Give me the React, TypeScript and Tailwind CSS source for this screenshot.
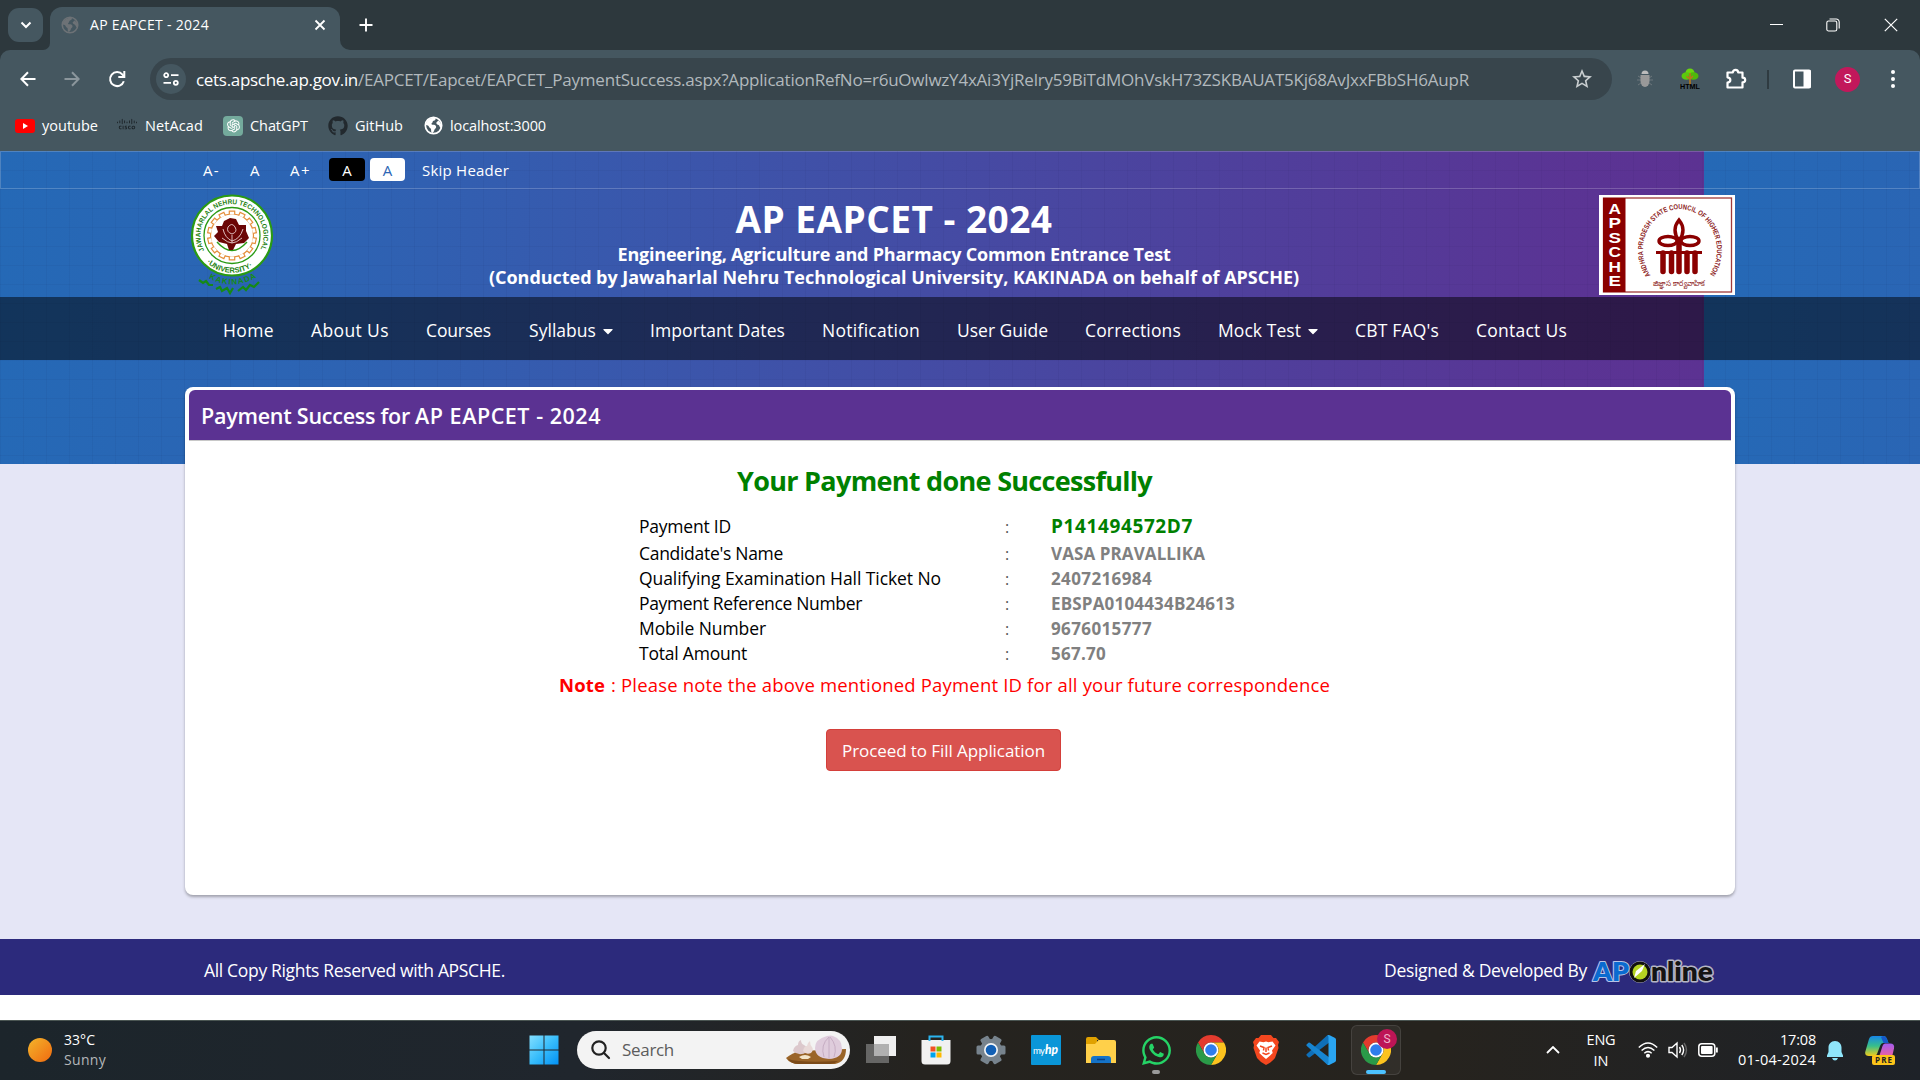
import { useLayoutEffect, useRef, useState, type ReactNode } from "react";
import { AiOutlineOpenAI } from "react-icons/ai";
import { FaGithub, FaWhatsapp, FaCaretDown } from "react-icons/fa";
import { SiBrave, SiCisco } from "react-icons/si";
import { MdStarBorder } from "react-icons/md";

/** Single line of text whose tracking is adjusted so that it fills the element's width. */
function T({ className, children }: { className: string; children: ReactNode }) {
  const outer = useRef<HTMLSpanElement>(null);
  const inner = useRef<HTMLSpanElement>(null);
  const [tracking, setTracking] = useState(0);
  useLayoutEffect(() => {
    if (!outer.current || !inner.current) return;
    const n = (inner.current.textContent ?? "").length;
    const diff = outer.current.clientWidth - inner.current.getBoundingClientRect().width;
    if (n > 1) setTracking(diff / n);
  }, []);
  return (
    <span ref={outer} className={"block shrink-0 whitespace-nowrap " + className}>
      <span ref={inner} style={{ letterSpacing: tracking }}>
        {children}
      </span>
    </span>
  );
}

function Globe({ className }: { className: string }) {
  return (
    <svg viewBox="0 0 20 20" className={className}>
      <circle cx="10" cy="10" r="8.6" fill="none" stroke="currentColor" strokeWidth="1.8" />
      <path
        d="M2 7.5C4 3.5 8 1.5 12 2c.6 1.8-.4 2.6-2 3-1.4.4-.4 1.8-1.6 2.4-1 .5-.6 1.8.6 1.8 2.6 0 3.8.6 3.8 2.4 0 1.4-1.4 1.6-1.8 2.8-.4 1.4-1 3-2.4 3.4-1.4-.8-1-2.4-1.2-3.8-.2-1.2-1.8-1.2-2.2-2.6C4.900 10 3.600 9.600 2 9.400zM13 7c.4-1.200 1.800-1 2-2.400l2.600 3c.8 2 .6 3.600 0 5-1.200-.2-1-2.200-2.200-3-1-.6-2.800-1.200-2.400-2.600z"
        fill="currentColor"
      />
    </svg>
  );
}

function ChromeIcon() {
  return (
    <svg viewBox="0 0 48 48" className="size-[30px] shrink-0">
      <path fill="#e33b2e" d="M24 12h20.780a23.990 23.990 0 0 0-41.564.003L13.608 30l.01-.002A11.985 11.985 0 0 1 24 12z" />
      <path fill="#fcc31e" d="M34.391 30.003 24 48a23.990 23.990 0 0 0 20.780-35.997H24v.01a11.985 11.985 0 0 1 10.391 17.990z" />
      <path fill="#2a9a48" d="M13.609 30.003 3.218 12.006A23.994 23.994 0 0 0 24.003 48l10.392-17.997-.007-.007a11.985 11.985 0 0 1-20.778.007z" />
      <circle cx="24" cy="24" r="12" fill="#fff" />
      <circle cx="24" cy="24" r="9.300" fill="#2f7ded" />
    </svg>
  );
}

function TabStrip() {
  return (
    <div className="flex h-[50px] bg-[#2d383d] text-white">
      <div className="mt-2 ml-2 flex h-[34px] w-[35px] items-center justify-center rounded-[11px] bg-[#455760]">
        <svg viewBox="0 0 12 12" className="size-3" fill="none" stroke="currentColor" strokeWidth="2">
          <path d="M1.500 3.500 6 8l4.500-4.500" />
        </svg>
      </div>
      <div className="flex w-[7px] items-end">
        <div className="h-[10px] w-[7px] bg-[#455760]">
          <div className="h-full w-full rounded-br-[9px] bg-[#2d383d]" />
        </div>
      </div>
      <div className="mt-[7px] flex w-[290px] items-center rounded-t-xl bg-[#455760] pb-[7px] pl-[11px]">
        <Globe className="size-[18px] text-[#6d7276]" />
        <T className="ml-[11px] w-[119px] font-['Open_Sans'] text-[14px] leading-5">AP EAPCET - 2024</T>
        <svg viewBox="0 0 12 12" className="ml-[105px] size-3" fill="none" stroke="currentColor" strokeWidth="1.800">
          <path d="m1.500 1.500 9 9m0-9-9 9" />
        </svg>
      </div>
      <div className="flex w-[10px] items-end">
        <div className="h-[10px] w-full bg-[#455760]">
          <div className="h-full w-full rounded-bl-[10px] bg-[#2d383d]" />
        </div>
      </div>
      <svg viewBox="0 0 14 14" className="mt-[18px] ml-[9px] size-[14px]" stroke="currentColor" strokeWidth="1.900">
        <path d="M7 .5v13M.5 7h13" />
      </svg>
      <div className="mr-[22px] ml-auto flex h-[49px] items-center">
        <div className="h-px w-[13px] bg-white" />
        <svg viewBox="0 0 14 14" className="ml-[43px] size-[14px]" fill="none" stroke="currentColor" strokeWidth="1.100">
          <rect x=".8" y="3" width="10" height="10" rx="1.800" />
          <path d="M3.500 1h6.700a3 3 0 0 1 3 3v6.500" />
        </svg>
        <svg viewBox="0 0 14 14" className="ml-[44px] size-[14px]" fill="none" stroke="currentColor" strokeWidth="1.200">
          <path d="m.8.8 12.400 12.400m0-12.400L.8 13.200" />
        </svg>
      </div>
    </div>
  );
}

function Toolbar() {
  return (
    <div className="bg-[#2d383d]">
      <div className="flex h-[58px] items-center rounded-t-[10px] bg-[#455760] text-white">
        <svg viewBox="0 0 16 16" className="ml-5 size-4" fill="none" stroke="currentColor" strokeWidth="2">
          <path d="M15.500 8H1.600M8 1.300 1.400 8 8 14.700" />
        </svg>
        <svg viewBox="0 0 16 16" className="ml-7 size-4 text-[#8b969c]" fill="none" stroke="currentColor" strokeWidth="2">
          <path d="M.5 8h13.900M8 1.300 14.600 8 8 14.700" />
        </svg>
        <svg viewBox="0 0 18 18" className="ml-[28px] size-[18px]" fill="none" stroke="currentColor" strokeWidth="2">
          <path d="M15.800 11.200A7 7 0 1 1 14.500 4.600L16 6.300" />
          <path d="M16.300 1v6h-6" />
        </svg>
        <div className="ml-[24px] flex h-[42px] w-[1462px] items-center rounded-full bg-[#38454c] pl-1.5">
          <div className="flex size-[30px] items-center justify-center rounded-full bg-[#455760]">
            <svg viewBox="0 0 16 14" className="h-[14px] w-4" fill="none" stroke="currentColor" strokeWidth="1.800">
              <circle cx="3.200" cy="3.200" r="2" />
              <path d="M8 3.200h7.500M.5 10.800H8" />
              <circle cx="12.800" cy="10.800" r="2" />
            </svg>
          </div>
          <T className="mt-px ml-[10px] w-[162px] font-['Open_Sans'] text-[17px] leading-6">cets.apsche.ap.gov.in</T>
          <T className="mt-px w-[1111px] font-['Open_Sans'] text-[17px] leading-6 text-[#b2b9bd]">
            /EAPCET/Eapcet/EAPCET_PaymentSuccess.aspx?ApplicationRefNo=r6uOwlwzY4xAi3YjRelry59BiTdMOhVskH73ZSKBAUAT5Kj68AvJxxFBbSH6AupR
          </T>
          <MdStarBorder className="ml-[101px] size-6 text-[#c9ced0]" />
        </div>
        <svg viewBox="0 0 18 18" className="ml-[24px] size-[18px]">
          <path d="M2 6l3 2M16 6l-3 2M1 10h4m12 0h-4M2 15l3-2m11 2-3-2" stroke="#6d777c" />
          <path d="M5.500 4a3.500 3.500 0 0 1 7 0z" fill="#bbb" />
          <path d="M4.500 5h9v6a4.500 6 0 0 1-9 0z" fill="#999" />
        </svg>
        <svg viewBox="0 0 20 22" className="ml-[26px] h-[22px] w-5">
          <circle cx="10" cy="5" r="4.500" fill="#6ad60f" />
          <ellipse cx="6.500" cy="8" rx="5" ry="3.800" fill="#5cc90d" />
          <ellipse cx="13.500" cy="8" rx="5" ry="3.800" fill="#4fb80b" />
          <path d="M10 5v12M6.500 8.500l3.500 2.500 3-3" stroke="#b8791a" strokeWidth="1.600" fill="none" />
          <text x="0" y="21" textLength="20" lengthAdjust="spacingAndGlyphs" fontSize="7.500" fontWeight="900" fontFamily="Liberation Sans, sans-serif" fill="#000">
            HTML
          </text>
        </svg>
        <svg viewBox="0 0 24 24" className="ml-[24px] size-6" fill="none" stroke="currentColor" strokeWidth="2.200" strokeLinejoin="round">
          <path d="M3.500 5.500h5.300c0-3.600 5.400-3.600 5.400 0h4.300v5.200c3.600 0 3.600 4.600 0 4.600v5.200h-15v-4.800c3.800-.6 3.800-4.800 0-5.400z" />
        </svg>
        <div className="ml-[19px] h-[19px] w-0.5 bg-[#2f3b41]" />
        <svg viewBox="0 0 20 20" className="ml-[23px] size-5">
          <rect x="2" y="1.500" width="16" height="17" rx="1" fill="none" stroke="#fff" strokeWidth="2" />
          <path d="M11.500 1h7v18h-7z" fill="#fff" />
        </svg>
        <div className="ml-[23px] flex size-[25px] items-center justify-center rounded-full bg-[#c2185b] font-[Roboto] text-[13px]">S</div>
        <div className="ml-[31px] flex flex-col gap-[3px]">
          <div className="size-1 rounded-full bg-white" />
          <div className="size-1 rounded-full bg-white" />
          <div className="size-1 rounded-full bg-white" />
        </div>
      </div>
    </div>
  );
}

function Bookmarks() {
  return (
    <div className="flex h-[43px] items-center bg-[#455760] pb-[8px] font-['Open_Sans'] text-[14.500px] leading-5 text-white">
      <svg viewBox="0 0 20 14" className="ml-[15px] h-[14px] w-5">
        <rect width="20" height="14" rx="3" fill="#f00" />
        <path d="M8 4v6l5-3z" fill="#fff" />
      </svg>
      <T className="ml-[7px] w-[56px]">youtube</T>
      <SiCisco className="-mt-1 ml-[19px] size-5 text-[#1b2226]" />
      <T className="ml-[8px] w-[58px]">NetAcad</T>
      <div className="ml-[20px] flex size-5 items-center justify-center rounded-sm bg-[#74aa9c]">
        <AiOutlineOpenAI className="size-[17px]" />
      </div>
      <T className="ml-[7px] w-[58px]">ChatGPT</T>
      <FaGithub className="ml-[20px] size-5 text-[#22292e]" />
      <T className="ml-[7px] w-[48px]">GitHub</T>
      <Globe className="ml-[21px] size-[19px]" />
      <T className="ml-[7px] w-[96px]">localhost:3000</T>
    </div>
  );
}

function UniversitySeal() {
  const teeth = Array.from({ length: 14 }, (_, i) => i * (360 / 14));
  return (
    <svg viewBox="0 0 84 103" className="h-[103px] w-[84px]" fontFamily="Liberation Sans, sans-serif">
      <defs>
        <path id="sealTop" d="M14.700 57.300A31.500 31.500 0 1 1 69.300 57.300" />
        <path id="sealBottom" d="M14.500 66.500A37 37 0 0 0 69.500 66.500" />
        <path id="sealTown" d="M12 80Q42 101 72 80" />
      </defs>
      <circle cx="42" cy="41.500" r="40" fill="#fff" stroke="#2a9a14" strokeWidth="2.200" />
      <circle cx="42" cy="41.500" r="28" fill="#fff" stroke="#2a9a14" strokeWidth="1.300" />
      <circle cx="42" cy="41.500" r="21.500" fill="none" stroke="#e58f3c" strokeWidth="1.200" />
      {teeth.map((a) => (
        <path key={a} d="M39.300 20.500v-3.400h5.400v3.400" fill="#fff" stroke="#e58f3c" strokeWidth="1.200" transform={`rotate(${a} 42 41.500)`} />
      ))}
      <path d="M27 48q15 17 30 0" fill="none" stroke="#2a9a14" strokeWidth="1.400" />
      <path d="M40 24l6 1 3 6 7 0 0 6 3 7-5 5-8 1-3 6-4 0-2-6-8-2-5-6 4-4-2-6 6 0 2-5z" fill="#6b0505" />
      <path d="M38 33q4-5 7 0t-3 7q-6-2-4-7M33 35q2 9 9 12 8-2 11-12M32 44q6 5 10 5t10-5M42 41v8" fill="none" stroke="#e9cfcf" strokeWidth=".9" />
      <text fontSize="6.900" fontWeight="bold" fill="#1d7f10" textLength="128" lengthAdjust="spacingAndGlyphs">
        <textPath href="#sealTop" startOffset="1" textLength="128" lengthAdjust="spacingAndGlyphs">JAWAHARLAL NEHRU TECHNOLOGICAL</textPath>
      </text>
      <text fontSize="7.500" fontWeight="bold" fill="#1d7f10">
        <textPath href="#sealBottom" startOffset="3">·UNIVERSITY·</textPath>
      </text>
      <text fontSize="8" fontWeight="bold" fill="#168a16">
        <textPath href="#sealTown" startOffset="8" textLength="50">KAKINADA</textPath>
      </text>
      <path d="M9 86l4 3 3-2 3 4 4 0M26 95l4-2 2 4 5-3 3 5 3-5M48 97l5-4 3 3 4-5 4 2 5-5" fill="none" stroke="#168a16" strokeWidth="2.200" />
    </svg>
  );
}

function CouncilLogo() {
  return (
    <svg viewBox="0 0 136 100" className="h-[100px] w-[136px]" fontFamily="Liberation Sans, sans-serif">
      <defs>
        <path id="councilArc" d="M51.500 80A37 41 0 1 1 111 79" />
      </defs>
      <rect width="136" height="100" fill="#fff" />
      <rect x="4.500" y="3" width="128" height="94" fill="none" stroke="#a03a3a" strokeWidth="1.300" />
      <rect x="4" y="3" width="22.500" height="94" fill="#8b0000" />
      {["A", "P", "S", "C", "H", "E"].map((c, i) => (
        <text key={i} x="9.500" y={18.500 + i * 14.500} textLength="12.500" lengthAdjust="spacingAndGlyphs" fontSize="14" fontWeight="bold" fill="#fff">
          {c}
        </text>
      ))}
      <text fontSize="7.200" fontWeight="bold" fill="#8b1a1a">
        <textPath href="#councilArc" textLength="174" lengthAdjust="spacingAndGlyphs">ANDHRA PRADESH STATE COUNCIL OF HIGHER EDUCATION</textPath>
      </text>
      <g fill="none" stroke="#8b0000" strokeWidth="3.400">
        <path d="M80 25q-8 10 0 21 8-11 0-21z" />
        <ellipse cx="69" cy="46" rx="9" ry="4.500" />
        <ellipse cx="91" cy="46" rx="9" ry="4.500" />
      </g>
      <path d="M57 56h46v3H57zM78 42h4v16h-4z" fill="#8b0000" />
      <g stroke="#8b0000" strokeWidth="5.500" strokeLinecap="round">
        <path d="M64 58v18.500M72.500 58v18.500M80 50v26.500M88 58v18.500M96 58v18.500" />
      </g>
      <text x="54" y="91" textLength="52" lengthAdjust="spacingAndGlyphs" fontSize="8" fill="#8b1a1a" fontFamily="'Noto Sans', sans-serif">
        జిజ్ఞాస కార్యవాహిక
      </text>
    </svg>
  );
}

function Accessibility() {
  return (
    <div className="flex h-[38px] items-center border border-white/20 font-['Open_Sans'] text-[15px] leading-5 text-white">
      <T className="ml-[202px] w-[17px]">A-</T>
      <T className="ml-[30px] w-[10px]">A</T>
      <T className="ml-[30px] w-[21px]">A+</T>
      <div className="mb-px ml-[18px] flex h-[23px] w-[36px] items-center justify-center rounded bg-black">A</div>
      <div className="mb-px ml-[5px] flex h-[23px] w-[35px] items-center justify-center rounded bg-white text-[#2c66b5]">A</div>
      <T className="ml-[17px] w-[87px]">Skip Header</T>
    </div>
  );
}

function Nav() {
  return (
    <nav className="flex h-[63px] items-center bg-black/50 pt-[2px] font-['Open_Sans'] text-[17.500px] leading-6 text-white">
      <T className="ml-[223px] w-[51px]">Home</T>
      <T className="ml-[37px] w-[78px]">About Us</T>
      <T className="ml-[37px] w-[65px]">Courses</T>
      <T className="ml-[38px] w-[67px]">Syllabus</T>
      <FaCaretDown className="mt-[3px] ml-[4px] size-4" />
      <T className="ml-[34px] w-[135px]">Important Dates</T>
      <T className="ml-[37px] w-[98px]">Notification</T>
      <T className="ml-[37px] w-[91px]">User Guide</T>
      <T className="ml-[37px] w-[96px]">Corrections</T>
      <T className="ml-[37px] w-[83px]">Mock Test</T>
      <FaCaretDown className="mt-[3px] ml-[4px] size-4" />
      <T className="ml-[34px] w-[84px]">CBT FAQ's</T>
      <T className="ml-[37px] w-[91px]">Contact Us</T>
    </nav>
  );
}

function Row({ label, children }: { label: ReactNode; children: ReactNode }) {
  return (
    <div className="flex h-[25px] items-center">
      <div className="-mt-0.5 w-[366px]">{label}</div>
      <div className="w-[46px] text-[16px] text-[#555]">:</div>
      {children}
    </div>
  );
}

function PaymentCard() {
  return (
    <section className="mx-auto h-[508px] w-[1550px] rounded-lg bg-white p-1 pt-[3px] font-['Open_Sans'] text-black shadow-[0_2px_3px_rgba(0,0,0,0.3)]">
      <div className="flex h-[51px] items-center rounded-t-md border-b border-[#c8c8c8] bg-[#5b3292] pt-[2px] pl-[12px] text-[21.500px] leading-8 font-semibold text-white">
        <T className="w-[209px]">Payment Success for</T>
        <T className="ml-[5px] w-[186px]">AP EAPCET - 2024</T>
      </div>
      <div className="pr-[31px]">
        <h2 className="flex justify-center pt-[20px] text-[#008000]">
          <T className="w-[415px] text-[27px] leading-10 font-bold">Your Payment done Successfully</T>
        </h2>
        <div className="pt-[13px] pl-[450px] text-[17.500px] leading-6 text-[#808080]">
          <div className="mb-[2px]">
            <Row label={<T className="w-[92px] font-medium text-black">Payment ID</T>}>
              <T className="-mt-0.5 w-[142px] text-[19px] font-bold text-[#008000]">P141494572D7</T>
            </Row>
          </div>
          <Row label={<T className="w-[144px] font-medium text-black">Candidate's Name</T>}>
            <T className="w-[154px] text-[17px] font-bold">VASA PRAVALLIKA</T>
          </Row>
          <Row label={<T className="w-[302px] font-medium text-black">Qualifying Examination Hall Ticket No</T>}>
            <T className="w-[101px] text-[17px] font-bold">2407216984</T>
          </Row>
          <Row label={<T className="w-[223px] font-medium text-black">Payment Reference Number</T>}>
            <T className="w-[184px] text-[17px] font-bold">EBSPA0104434B24613</T>
          </Row>
          <Row label={<T className="w-[127px] font-medium text-black">Mobile Number</T>}>
            <T className="w-[101px] text-[17px] font-bold">9676015777</T>
          </Row>
          <Row label={<T className="w-[108px] font-medium text-black">Total Amount</T>}>
            <T className="w-[55px] text-[17px] font-bold">567.70</T>
          </Row>
        </div>
        <p className="flex justify-center pt-[5px] text-[18.500px] leading-7 text-[#f00]">
          <T className="w-[46px] font-bold">Note</T>
          <T className="ml-[6px] w-[719px]">: Please note the above mentioned Payment ID for all your future correspondence</T>
        </p>
        <button className="mx-auto mt-[30px] flex h-[42px] w-[235px] -translate-x-px items-center justify-center rounded border border-[#d43f3a] bg-[#d9534f] pt-px text-[17px] leading-6 text-white">
          <T className="w-[203px]">Proceed to Fill Application</T>
        </button>
      </div>
    </section>
  );
}

function Page() {
  return (
    <main className="h-[869px] bg-white">
      <div className="bg-[#e5e6f6]">
        <div className="h-[313px] bg-[repeating-linear-gradient(90deg,rgba(0,0,40,0.04)_0_1px,transparent_1px_23px),repeating-linear-gradient(180deg,rgba(0,0,40,0.04)_0_1px,transparent_1px_19px),linear-gradient(90deg,#2569b6,#2d63b3_20%,#3a57ac_38%,#4b449f_66%,#5a3494_92%,#5c3292)] bg-[size:auto,auto,1704px_100%]">
          <Accessibility />
          <header className="flex h-[108px] text-white">
            <div className="ml-[190px] pt-[5px]">
              <UniversitySeal />
            </div>
            <div className="ml-[215px] flex w-[810px] flex-col items-center font-['Open_Sans'] font-bold">
              <T className="mt-[6px] w-[317px] text-[37px] leading-[48px]">AP EAPCET - 2024</T>
              <T className="w-[553px] text-[18px] leading-[23px]">Engineering, Agriculture and Pharmacy Common Entrance Test</T>
              <T className="w-[810px] text-[18px] leading-[23px]">
                (Conducted by Jawaharlal Nehru Technological University, KAKINADA on behalf of APSCHE)
              </T>
            </div>
            <div className="ml-[300px] pt-[6px]">
              <CouncilLogo />
            </div>
          </header>
          <Nav />
          <div className="pt-[27px]">
            <PaymentCard />
          </div>
        </div>
        <div className="h-[475px]" />
      </div>
      <footer className="flex h-[56px] items-center bg-[#2c2a7c] pt-[6px] font-['Open_Sans'] text-[17.500px] leading-6 text-white">
        <T className="ml-[204px] w-[301px]">All Copy Rights Reserved with APSCHE.</T>
        <T className="ml-[879px] w-[203px]">Designed &amp; Developed By</T>
        <svg viewBox="0 0 126 30" className="mt-0.5 ml-[4px] h-[30px] w-[126px] overflow-visible" fontFamily="Lato, 'Open Sans', sans-serif" fontWeight="800" fontSize="26" paintOrder="stroke" strokeLinejoin="round">
          <text x="2" y="25" textLength="36" lengthAdjust="spacingAndGlyphs" fill="#0a6bd0" stroke="#b9c4e6" strokeWidth="2">AP</text>
          <circle cx="49" cy="16" r="10.500" fill="#111" stroke="#b5b5c4" />
          <circle cx="49" cy="16" r="7.500" fill="#b4d321" />
          <path d="M43 22l2-7 9-7-3 7z" fill="#fff" />
          <text x="60" y="25" textLength="62" lengthAdjust="spacingAndGlyphs" fill="#141414" stroke="#b5b5c4" strokeWidth="3">nline</text>
        </svg>
      </footer>
    </main>
  );
}

function SearchArt() {
  return (
    <svg viewBox="0 0 62 30" className="ml-[111px] h-[30px] w-[62px]">
      <path d="M1 23q6-5 14-7l46-2q0 13-11 15H14Q5 29 1 23z" fill="#9a6428" />
      <path d="M3 24q12 4 50 2-4 3-8 3H14Q6 29 3 24z" fill="#7b4a18" />
      <path d="M8 16q1-5 5-6 0-4 3-5 0 4 3 5 4 2 3 7-8 5-14-1z" fill="#dcc8cc" />
      <path d="M18 16q1-5 4-5 0-3 3-5 0 4 2 6 2 3-1 6-5 2-8-2z" fill="#e9d9d8" />
      <path d="M42 1q4-1 6 0 9 3 9 13 0 9-13 10-14-1-14-11 0-9 12-12z" fill="#dfccdc" />
      <path d="M44 2q-9 8-5 20M45 2q8 9 4 20M44 2v22" fill="none" stroke="#c3a9c0" strokeWidth=".9" />
      <path d="M14 22q6-4 12 0l-3 2h-6z" fill="#f3e4c8" />
    </svg>
  );
}

function Taskbar() {
  return (
    <div className="flex h-[60px] items-center border-t border-[#4a5552] bg-[linear-gradient(90deg,#1c252b,#20262d_30%,#25231f_48%,#26231e_75%,#1e2228)] pb-[2px] font-['Open_Sans'] text-white">
      <div className="ml-[28px] size-6 rounded-full bg-[linear-gradient(135deg,#f3b52b,#f06a10)]" />
      <div className="ml-[12px] w-[42px] text-[14px] leading-[20px]">
        <T className="w-[31px]">33°C</T>
        <T className="w-[42px] text-[#b4b7b9]">Sunny</T>
      </div>
      <svg viewBox="0 0 30 30" className="ml-[423px] size-[30px]">
        <defs>
          <linearGradient id="win" x1="0" y1="0" x2="30" y2="30" gradientUnits="userSpaceOnUse">
            <stop stopColor="#86e0ff" />
            <stop offset=".5" stopColor="#38bdfb" />
            <stop offset="1" stopColor="#0090f5" />
          </linearGradient>
        </defs>
        <path fill="url(#win)" d="M.5.500h14v14H.5zM15.500.500h14v14h-14zM.5 15.500h14v14H.5zM15.500 15.500h14v14h-14z" />
      </svg>
      <div className="ml-[18px] flex h-[38px] w-[273px] items-center overflow-hidden rounded-full bg-[#f3f3f3]">
        <svg viewBox="0 0 20 20" className="ml-[14px] size-5" fill="none" stroke="#222" strokeWidth="2.200" strokeLinecap="round">
          <circle cx="8" cy="8" r="6.700" />
          <path d="m13 13 5 5" />
        </svg>
        <T className="ml-[11px] w-[52px] text-[17px] leading-6 text-[#5c5c5c]">Search</T>
        <SearchArt />
      </div>
      <svg viewBox="0 0 30 30" className="ml-[16px] size-[30px]">
        <path d="M8 1h22v20H8z" fill="#efefef" />
        <path d="M0 9h23v19H0z" fill="#777" fillOpacity=".8" />
        <path d="M8 9h15v12H8z" fill="#b0b0b0" />
      </svg>
      <svg viewBox="0 0 30 30" className="ml-[25px] size-[30px]">
        <path d="M.5 5h29v21a3.500 3.500 0 0 1-3.500 3.500H4A3.500 3.500 0 0 1 .5 26z" fill="#f1f1f1" />
        <path d="M8.500 6V1.500h13V6" fill="none" stroke="#2bb4ee" strokeWidth="2" />
        <path d="M9.500 11.500h5v5h-5z" fill="#f25022" />
        <path d="M15.500 11.500h5v5h-5z" fill="#7fba00" />
        <path d="M9.500 17.500h5v5h-5z" fill="#00a4ef" />
        <path d="M15.500 17.500h5v5h-5z" fill="#ffb900" />
      </svg>
      <svg viewBox="0 0 30 30" className="ml-[25px] size-[30px]">
        {[0, 60, 120].map((a) => (
          <rect key={a} x="10.500" y=".5" width="9" height="29" rx="1.500" fill="#77838d" transform={`rotate(${a + 30} 15 15)`} />
        ))}
        <circle cx="15" cy="15" r="11" fill="#77838d" />
        <circle cx="15" cy="15" r="7" fill="#f2f4f6" />
        <circle cx="15" cy="15" r="5.300" fill="#1260b5" />
      </svg>
      <svg viewBox="0 0 30 30" className="ml-[25px] size-[30px]">
        <rect width="30" height="30" rx="1" fill="#0a96d8" />
        <text x="2" y="18.500" textLength="12" fontSize="9.500" fill="#fff" fontFamily="Lato, sans-serif">my</text>
        <text x="14" y="19" textLength="13" lengthAdjust="spacingAndGlyphs" fontSize="14" fontStyle="italic" fontWeight="900" fill="#fff" fontFamily="Lato, sans-serif">hp</text>
      </svg>
      <svg viewBox="0 0 30 30" className="ml-[25px] size-[30px]">
        <path d="M0 4q0-2 2-2h8l3 3h-2v5H0z" fill="#e0a100" />
        <path d="M0 9h9l3.500-4H28q2 0 2 2v21H0z" fill="#ffd04a" />
        <path d="M5 28v-4q0-3 3-3h14q3 0 3 3v4z" fill="#1573c8" />
        <path d="M11 24.500h8" stroke="#0a3f83" strokeWidth="1.500" />
      </svg>
      <div className="ml-[25px] flex h-[50px] w-[30px] flex-col items-center pt-[9px]">
        <FaWhatsapp className="size-[33px] shrink-0 text-[#25d366]" />
        <div className="mt-[3px] h-1 w-2 shrink-0 rounded-full bg-[#9a9a9a]" />
      </div>
      <div className="ml-[25px]">
        <ChromeIcon />
      </div>
      <div className="ml-[25px] flex size-[30px] items-center justify-center">
        <svg viewBox="0 0 26 30" className="h-[30px] w-[26px]">
          <path d="M8 0h10l2.500 3H23l3 4-1 3 .5 3-3.500 10q-3 4-9 7-6-3-9-7L.5 13 1 10 0 7l3-4h2.500z" fill="#f4471f" />
          <path d="m6.500 6.500 4 .8L13 6.500l2.500.8 4-.8 3 4-3.500 5 .7 2.500-3.700 3.500L13 24l-3-2.500L6.300 18l.7-2.500-3.500-5z" fill="#fff" />
          <path d="m7 11 4 1.500-.5 3M19 11l-4 1.500.5 3M13 12.500V17M9.500 18l3.500 1.500 3.500-1.500" fill="none" stroke="#f4471f" strokeWidth="1.500" />
        </svg>
      </div>
      <svg viewBox="0 0 100 100" className="ml-[25px] size-[30px]">
        <path d="M71 1 2 64q-2 2 0 4l6 6q2 2 5 0L96 11z" fill="#0f6fb8" />
        <path d="M71 99 2 36q-2-2 0-4l6-6q2-2 5 0L96 89z" fill="#1785d1" />
        <path d="M71 99q4 2 8 0l18-9q3-2 3-5V15q0-3-3-5L79 1q-4-2-8 0 4 2 4 7v84q0 5-4 7z" fill="#2aa5f2" />
      </svg>
      <div className="relative ml-[15px] flex h-[50px] w-[50px] flex-col items-center rounded-md border border-white/10 bg-white/5 pt-[9px]">
        <ChromeIcon />
        <div className="mt-[5px] h-1 w-5 rounded-full bg-[#4cc2ff]" />
        <div className="absolute top-[3px] left-[25px] flex size-5 items-center justify-center rounded-full bg-[#bd1556] font-[Roboto] text-[12px] text-[#f0b5cc]">S</div>
      </div>
      <svg viewBox="0 0 14 8" className="ml-[145px] h-2 w-[14px]" fill="none" stroke="currentColor" strokeWidth="1.800">
        <path d="m1 7 6-6 6 6" />
      </svg>
      <div className="ml-[26px] flex w-[30px] flex-col items-center text-[14.500px] leading-[21px]">
        <T className="w-[29px]">ENG</T>
        <T className="w-[15px]">IN</T>
      </div>
      <svg viewBox="0 0 20 17" className="ml-[22px] h-[17px] w-5" fill="none" stroke="currentColor" strokeWidth="1.500">
        <path d="M.8 6.500q9.200-9 18.400 0M3.600 9.500q6.400-6 12.800 0M6.300 12.300q3.700-3.300 7.400 0" />
        <circle cx="10" cy="14.800" r="1.300" fill="currentColor" />
      </svg>
      <svg viewBox="0 0 20 18" className="ml-[10px] h-[18px] w-5" fill="none" stroke="currentColor" strokeWidth="1.400">
        <path d="M1 6.500h3L9 2v14l-5-4.500H1zM11.500 6q2 3 0 6M13.800 4q3.600 5 0 10" />
        <path d="M16 2q5 7 0 14" stroke="#666" />
      </svg>
      <svg viewBox="0 0 20 14" className="ml-[10px] h-[14px] w-5">
        <rect x=".8" y=".8" width="16" height="12.400" rx="3" fill="none" stroke="#fff" strokeWidth="1.500" />
        <rect x="3" y="3" width="11.600" height="8" rx="1" fill="#fff" />
        <path d="M18 4.500h1.800v5H18z" fill="#fff" />
      </svg>
      <div className="ml-[20px] flex w-[78px] flex-col items-end text-[14.500px] leading-[20px]">
        <T className="w-[36px]">17:08</T>
        <T className="w-[78px]">01-04-2024</T>
      </div>
      <svg viewBox="0 0 16 20" className="mt-[2px] ml-[11px] h-5 w-4" fill="#8fe6fb">
        <path d="M8 0c-4 0-6.500 3-6.500 6.500V11L0 14.500V16h16v-1.500L14.500 11V6.500C14.500 3 12 0 8 0zM5 17h6q-1 2.500-3 2.500T5 17z" />
      </svg>
      <svg viewBox="0 0 30 30" className="ml-[22px] size-[30px]">
        <defs>
          <linearGradient id="copA" x1="0" y1="0" x2="0" y2="1">
            <stop stopColor="#1787e8" />
            <stop offset=".5" stopColor="#37bf8a" />
            <stop offset="1" stopColor="#f3cc1a" />
          </linearGradient>
          <linearGradient id="copB" x1="0" y1="0" x2="0" y2="1">
            <stop stopColor="#a35cf0" />
            <stop offset="1" stopColor="#f0609c" />
          </linearGradient>
        </defs>
        <path d="M8 1h11q2 0 3 3l1.500 4H18q-2 0-3 3l-3 8q-.8 2-3 2H4q-5 0-3.500-5L4 4q1-3 4-3z" fill="url(#copA)" />
        <path d="M18 1q3 0 4 3l1.500 4h-5L16 2z" fill="#1559c9" />
        <path d="M20 8.500h5q5 0 4 5L27 22H14l3.500-11q.8-2.500 2.500-2.500z" fill="url(#copB)" />
        <rect x="7" y="20" width="23" height="10" rx="2" fill="#fcc419" />
        <text x="10" y="28" textLength="17" fontSize="8" fontWeight="bold" fill="#222" fontFamily="Open Sans, sans-serif">PRE</text>
      </svg>
    </div>
  );
}

export default function App() {
  return (
    <div className="h-[1080px] w-[1920px] overflow-hidden bg-white">
      <TabStrip />
      <Toolbar />
      <Bookmarks />
      <Page />
      <Taskbar />
    </div>
  );
}
